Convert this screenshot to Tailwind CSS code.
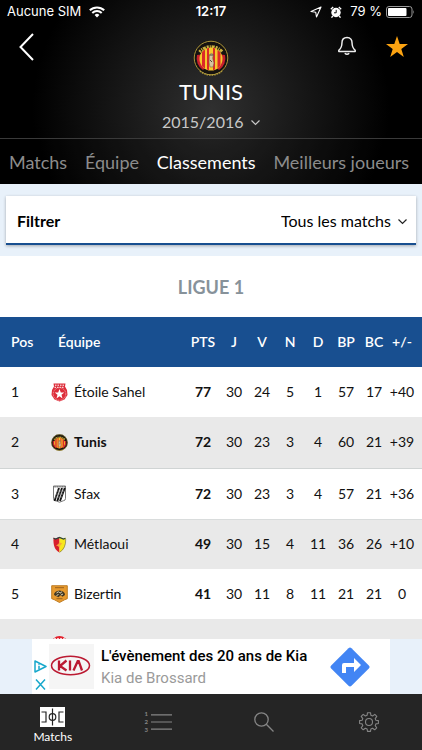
<!DOCTYPE html>
<html lang="fr">
  <head>
    <meta charset="UTF-8" />
    <meta name="viewport" content="width=device-width, initial-scale=1.0" />
    <title>Tunis - Classements</title>
    <script src="https://cdn.jsdelivr.net/npm/@tailwindcss/browser@4"></script>
  </head>
  <body class="h-screen flex flex-col overflow-hidden bg-[#e8f1fa] font-['Lato',sans-serif] text-[#111]">
    <!-- Shared crests -->
    <svg class="hidden">
      <symbol id="crest-tunis" viewBox="0 0 36 36">
        <circle cx="18" cy="18" r="17.5" fill="#161310" />
        <circle cx="18" cy="18" r="16.8" fill="none" stroke="#b09a3c" stroke-width="1" />
        <path d="M4 15a14 14 0 0 0 6 15l3-3V14z" fill="#c8202c" />
        <path d="M32 15a14 14 0 0 1-6 15l-3-3V14z" fill="#c8202c" />
        <path d="M6.5 12a15 15 0 0 1 23 0" fill="none" stroke="#cdb23f" stroke-width="3" stroke-dasharray="2 1 1 .8 3 1" />
        <path d="M7 31a17 17 0 0 0 22 0" fill="none" stroke="#b09a3c" stroke-width="1.6" stroke-dasharray="1.5 1" />
        <circle cx="18" cy="19" r="11.5" fill="#f6c62c" />
        <path d="M9 12.500q2-2.500 3-3v19q-1.500-1-3-2.600zM14 8.500l2-.7v22.500l-2-.7zM20 7.800l2 .7v21l-2 .7zM24.500 10q2 1.500 3 3v12q-1 2-3 3.500z" fill="#dc2828" />
        <path d="M16.500 15l2-2 2 2-1 3 1.500 5-1 4h-3l-1-5z" fill="#d6c4a0" stroke="#6b5434" stroke-width=".5" />
        <path d="M16.500 15h4M17 20l2 2" stroke="#332820" stroke-width=".8" />
      </symbol>
      <symbol id="crest-sahel" viewBox="0 0 17 19">
        <path d="M2.500.5h12l-.5 3 2 3.500.5 5-3 4.500-5 2-5-2-3-4.500L1 7l2-3.500z" fill="#dd2d3a" />
        <path d="M4 2.200h9M3.500 4.300h10" stroke="#fff" stroke-width="1" stroke-dasharray="1.500 1" />
        <circle cx="8.500" cy="11" r="6.300" fill="none" stroke="#f7b9bd" stroke-width=".8" stroke-dasharray="1 .7" />
        <path d="M8.500 6l1.300 3.500 3.500.1-2.800 2.200 1 3.600-3-2.100-3 2.100 1-3.600-2.800-2.200 3.500-.1z" fill="#fff" />
      </symbol>
    </svg>

    <header class="shrink-0 bg-[radial-gradient(circle_at_50%_60%,#303030_0%,#1b1b1b_32%,#000_75%)] text-white">
      <!-- Status bar -->
      <div class="h-6 px-[7px] grid grid-cols-3 items-center font-['Inter',sans-serif] text-[13px]">
        <div class="flex items-center gap-2 whitespace-nowrap">
          <span>Aucune SIM</span>
          <svg class="w-4 h-3" viewBox="0 0 16 12" fill="none" stroke="#fff" stroke-width="2">
            <path d="M.8 4.300a10.400 10.400 0 0 1 14.400 0M3.300 7a6.800 6.800 0 0 1 9.400 0" />
            <path d="M8 11.500L5.600 9a3.500 3.500 0 0 1 4.800 0z" fill="#fff" stroke="none" />
          </svg>
        </div>
        <div class="text-center font-semibold">12:17</div>
        <div class="flex items-center justify-end gap-1 whitespace-nowrap">
          <svg class="w-3 h-3 mr-1" viewBox="0 0 12 12" fill="none" stroke="#fff" stroke-width="1.100" stroke-linejoin="round">
            <path d="M11 1L1 5.500l4.700.7.800 4.800z" />
          </svg>
          <svg class="w-3 h-3 mr-1" viewBox="0 0 12 12">
            <circle cx="6" cy="6.500" r="4.700" fill="#fff" />
            <path d="M.8 3.200L3.200 1M11.200 3.200L8.800 1M2.800 10L1.500 11.700M9.200 10l1.300 1.700" stroke="#fff" stroke-width="1.300" />
            <path d="M6.200 3.800v3H4" fill="none" stroke="#111" stroke-width="1" />
          </svg>
          <span>79 %</span>
          <svg class="w-[29px] h-3" viewBox="0 0 29 12">
            <rect x=".5" y=".5" width="25.500" height="11" rx="2.500" fill="none" stroke="#999" />
            <rect x="2" y="2" width="18.500" height="8" rx="1" fill="#fff" />
            <path d="M27.300 4q1.500 2 0 4z" fill="#999" />
          </svg>
        </div>
      </div>

      <div class="flex justify-between items-start px-3 h-[114px]">
        <button class="w-[88px] pl-[7px] pt-[9px]" aria-label="Retour">
          <svg class="w-4 h-7" viewBox="0 0 16 28" fill="none" stroke="#fff" stroke-width="2">
            <path d="M14 1L1.500 14 14 27" />
          </svg>
        </button>
        <div class="flex flex-col items-center pt-4">
          <svg class="w-9 h-9"><use href="#crest-tunis" /></svg>
          <h1 class="text-[22px] leading-7 mt-[2px]">TUNIS</h1>
          <div class="relative mt-1">
            <select aria-label="Saison" class="appearance-none bg-transparent text-base leading-6 text-[#c8c8c8] pr-4">
              <option>2015/2016</option>
            </select>
            <svg class="absolute right-0 top-2 w-[9px] h-[9px] pointer-events-none" viewBox="0 0 9 9" fill="none" stroke="#c8c8c8" stroke-width="1.200">
              <path d="M.5 2.500l4 4 4-4" />
            </svg>
          </div>
        </div>
        <div class="w-[88px] flex justify-end items-start gap-[30px] pt-3 pr-[2px]">
          <button aria-label="Notifications">
            <svg class="w-[18px] h-5" viewBox="0 0 16 20" preserveAspectRatio="none" fill="none" stroke="#eee" stroke-width="1.300" stroke-linejoin="round">
              <path d="M8 1.500C4.800 1.500 3.500 4 3.500 7c0 4-.8 5.500-2.800 7.200v1.300h14.600v-1.300c-2-1.700-2.800-3.200-2.800-7.200 0-3-1.300-5.500-4.500-5.500z" />
              <path d="M6 17.200q2 2 4 0" />
            </svg>
          </button>
          <button aria-label="Favori">
            <svg class="w-[22px] h-[22px]" viewBox="0 0 22 22">
              <path d="M11 0l2.700 8H22l-6.700 5 2.500 8-6.800-5-6.800 5 2.500-8L0 8h8.300z" fill="#fca311" />
            </svg>
          </button>
        </div>
      </div>

      <nav class="h-[46px] border-t border-[#3a3a3a] px-[9px] flex items-center justify-between whitespace-nowrap text-lg text-[#8c8c8c] bg-black/20">
        <a href="#">Matchs</a>
        <a href="#">Équipe</a>
        <a href="#" class="text-white">Classements</a>
        <a href="#" class="mr-1">Meilleurs joueurs</a>
      </nav>
    </header>

    <main class="flex-1 min-h-0 overflow-hidden">
      <div class="px-[6px] pt-3 pb-[11px]">
        <div class="h-[49px] bg-white border-b-2 border-[#184f90] shadow-[0_1px_3px_rgba(0,0,0,0.3)] pl-[11px] pr-[9px] pt-[2px] flex items-center justify-between">
          <label for="filter" class="text-base font-bold text-black">Filtrer</label>
          <div class="relative">
            <select id="filter" class="appearance-none bg-transparent text-base leading-6 text-black pr-4">
              <option>Tous les matchs</option>
            </select>
            <svg class="absolute right-0 top-2 w-[9px] h-[9px] pointer-events-none" viewBox="0 0 9 9" fill="none" stroke="#222" stroke-width="1.200">
              <path d="M.5 2.500l4 4 4-4" />
            </svg>
          </div>
        </div>
      </div>

      <section class="bg-white">
        <h2 class="h-[61px] flex items-center justify-center text-lg font-bold text-[#87929a]">LIGUE 1</h2>
        <table class="w-full table-fixed text-center text-sm">
          <colgroup>
            <col class="w-[47px]" />
            <col />
            <col class="w-[34px]" />
            <col class="w-7" />
            <col class="w-7" />
            <col class="w-7" />
            <col class="w-7" />
            <col class="w-7" />
            <col class="w-7" />
            <col class="w-[34px]" />
          </colgroup>
          <thead class="bg-[#184f90] text-white">
            <tr class="h-[50px]">
              <th class="text-left pl-[11px] font-semibold">Pos</th>
              <th class="text-left pl-[11px] font-semibold">Équipe</th>
              <th class="font-semibold">PTS</th>
              <th class="font-semibold">J</th>
              <th class="font-semibold">V</th>
              <th class="font-semibold">N</th>
              <th class="font-semibold">D</th>
              <th class="font-semibold">BP</th>
              <th class="font-semibold">BC</th>
              <th class="font-semibold pr-[6px]">+/-</th>
            </tr>
          </thead>
          <tbody>
            <tr class="h-[50px]">
              <td class="text-left pl-[11px]">1</td>
              <td class="pl-1">
                <div class="flex items-center gap-[6px]">
                  <svg class="w-[17px] h-[19px]"><use href="#crest-sahel" /></svg>
                  <span>Étoile Sahel</span>
                </div>
              </td>
              <td class="font-bold">77</td><td>30</td><td>24</td><td>5</td><td>1</td><td>57</td><td>17</td>
              <td class="pr-[6px]">+40</td>
            </tr>
            <tr class="h-[51px] bg-[#e9e9e9] border-b border-[#d0d4d4]">
              <td class="text-left pl-[11px]">2</td>
              <td class="pl-1">
                <div class="flex items-center gap-[6px]">
                  <svg class="w-[17px] h-[17px]"><use href="#crest-tunis" /></svg>
                  <span class="font-bold">Tunis</span>
                </div>
              </td>
              <td class="font-bold">72</td><td>30</td><td>23</td><td>3</td><td>4</td><td>60</td><td>21</td>
              <td class="pr-[6px]">+39</td>
            </tr>
            <tr class="h-[51px] border-b border-[#d9dcdc]">
              <td class="text-left pl-[11px]">3</td>
              <td class="pl-1">
                <div class="flex items-center gap-[6px]">
                  <svg class="w-[17px] h-[18px]" viewBox="0 0 17 18">
                    <path d="M2.500 1h12v12.500q0 2-2 2.200l-4 1.500-4-1.500q-2-.2-2-2.200z" fill="#fff" stroke="#555" stroke-width=".8" />
                    <path d="M2.500 1.800h12" stroke="#777" stroke-width="1.600" stroke-dasharray="1.200 .5" />
                    <path d="M3.500 16L8 3M6.300 16L11 3M9 16l4.800-13" stroke="#151515" stroke-width="1.900" />
                    <path d="M5 9h7M4 12h7M6 6h7" stroke="#aaa" stroke-width=".6" />
                  </svg>
                  <span>Sfax</span>
                </div>
              </td>
              <td class="font-bold">72</td><td>30</td><td>23</td><td>3</td><td>4</td><td>57</td><td>21</td>
              <td class="pr-[6px]">+36</td>
            </tr>
            <tr class="h-[50px] bg-[#e9e9e9]">
              <td class="text-left pl-[11px]">4</td>
              <td class="pl-1">
                <div class="flex items-center gap-[6px]">
                  <svg class="w-[17px] h-[17px]" viewBox="0 0 17 17">
                    <path d="M2.500 1.500l2 1 4-1.500v15.500C4 14 2 10 2.500 1.500z" fill="#d81e2c" />
                    <path d="M14.500 1.500l-2 1-4-1.500v15.500c4.500-2.500 6.500-6.500 6-15z" fill="#f7e71d" />
                    <path d="M2.500 2.200l2 .8 4-1.600 4 1.600 2-.8" fill="none" stroke="#29443f" stroke-width="1.200" />
                    <path d="M8.500 5l1 2 2 .5-2 1.500-1 3-1.500-2-2-.5 2.500-1.500z" fill="#f9a83a" />
                    <path d="M14.700 3q.5 9-6 13.300" fill="none" stroke="#6c6340" stroke-width=".6" />
                  </svg>
                  <span>Métlaoui</span>
                </div>
              </td>
              <td class="font-bold">49</td><td>30</td><td>15</td><td>4</td><td>11</td><td>36</td><td>26</td>
              <td class="pr-[6px]">+10</td>
            </tr>
            <tr class="h-[50px]">
              <td class="text-left pl-[11px]">5</td>
              <td class="pl-1">
                <div class="flex items-center gap-[6px]">
                  <svg class="w-[17px] h-[18px]" viewBox="0 0 17 18">
                    <path d="M.7.7h15.600v13q-3 1-5 2.300L8.500 17.500 5.700 16q-2-1.300-5-2.300z" fill="#e79a2e" stroke="#b9751b" stroke-width=".9" />
                    <path d="M3 10q0-4 5.500-4.500Q14 6 14 10l-2.500 1.800-2-1.500-2 2z" fill="#423823" />
                    <path d="M5.500 8l2-1.300 1.500 1.500 2-1.500M5.500 10.500l2-1M10 10l2-1" fill="none" stroke="#ded6b8" stroke-width="1" />
                    <path d="M4 2.700h9M5.500 13.700h6" stroke="#845219" stroke-width=".8" />
                  </svg>
                  <span>Bizertin</span>
                </div>
              </td>
              <td class="font-bold">41</td><td>30</td><td>11</td><td>8</td><td>11</td><td>21</td><td>21</td>
              <td class="pr-[6px]">0</td>
            </tr>
            <!-- Next row, mostly hidden behind the ad -->
            <tr class="h-[50px] bg-[#e9e9e9]">
              <td></td>
              <td class="pl-1">
                <svg class="w-[17px] h-[18px]" viewBox="0 0 17 18">
                  <circle cx="8.500" cy="9" r="8" fill="#e3222e" />
                  <path d="M3 3.500h11" stroke="#f4c5c8" stroke-width="1" stroke-dasharray="2 1" />
                </svg>
              </td>
              <td></td><td></td><td></td><td></td><td></td><td></td><td></td><td></td>
            </tr>
          </tbody>
        </table>
      </section>
    </main>

    <!-- Ad banner -->
    <aside class="shrink-0 px-8 bg-[#e8f1fa]">
      <a href="#" class="h-[55px] bg-white flex items-center font-['Roboto',sans-serif] pl-[2px] pr-5">
        <span class="flex flex-col gap-[6px] pt-4 shrink-0">
          <svg class="w-[13px] h-[13px]" viewBox="0 0 13 13" fill="none" stroke="#18a8cc" stroke-width="1.500" stroke-linejoin="round">
            <path d="M1 1l11 5.500L1 12z" />
            <path d="M5 5.800v3.400M5 3.700v1" />
          </svg>
          <svg class="w-[13px] h-[11px]" viewBox="0 0 13 11" stroke="#18a8cc" stroke-width="1.500">
            <path d="M2 .5l9 10M11 .5l-9 10" />
          </svg>
        </span>
        <svg class="w-[45px] h-[45px] ml-[2px] shrink-0 bg-[#f5f5f5]" viewBox="0 0 45 45" fill="none" stroke="#bb1a32">
          <ellipse cx="21.500" cy="21.500" rx="19" ry="9.200" stroke-width="1.500" />
          <path d="M10 16.500v10M17.500 16.500L11 22l6.500 4.500M21 16.500v10M24.500 26.500l4.200-9.300h1l3.300 9.300" stroke-width="2.300" />
        </svg>
        <span class="flex-1 pl-[7px] pt-px whitespace-nowrap">
          <span class="block text-[15px] leading-[22px] font-medium text-black">L'évènement des 20 ans de Kia</span>
          <span class="block text-[15px] leading-[22px] text-[#9a9a9a]">Kia de Brossard</span>
        </span>
        <svg class="w-10 h-10 shrink-0" viewBox="0 0 40 40">
          <path d="M18.500 1.200q1.500-1.500 3 0l17.300 17.300q1.500 1.500 0 3L21.500 38.800q-1.500 1.500-3 0L1.200 21.500q-1.500-1.500 0-3z" fill="#4285f4" />
          <path d="M12 26V18q0-2 2-2h10v-5l7 7-7 7v-5h-8v6z" fill="#fff" />
        </svg>
      </a>
    </aside>

    <!-- Tab bar -->
    <nav class="shrink-0 h-14 bg-[#252525] grid grid-cols-4 items-center justify-items-center">
      <a href="#" class="flex flex-col items-center text-white text-xs leading-4 gap-[2px] pt-[7px]">
        <svg class="w-[25px] h-5" viewBox="0 0 25 20" fill="none" stroke="#252525" stroke-width="1.200">
          <path d="M0 0h25v20H0z" fill="#fff" stroke="none" />
          <path d="M1.500 5H6v10H1.500M23.500 5H19v10h4.500M12.500 1.500v17" />
          <circle cx="12.500" cy="10" r="3.300" />
        </svg>
        <span>Matchs</span>
      </a>
      <a href="#" class="flex items-center gap-[3px] text-[#858585]" aria-label="Classements">
        <span class="flex flex-col text-[6px] leading-[8px] font-bold"><span>1</span><span>2</span><span>3</span></span>
        <svg class="w-[21px] h-4" viewBox="0 0 21 16" stroke="currentColor" stroke-width="1.200">
          <path d="M0 .8h21M0 8h21M0 15.200h21" />
        </svg>
      </a>
      <a href="#" aria-label="Rechercher">
        <svg class="w-5 h-5" viewBox="0 0 20 20" fill="none" stroke="#858585" stroke-width="1.300">
          <circle cx="7.500" cy="7.500" r="6.700" />
          <path d="M12.300 12.300l7.200 7.200" />
        </svg>
      </a>
      <a href="#" aria-label="Réglages">
        <svg class="w-5 h-5" viewBox="0 0 20 20" fill="none" stroke="#858585" stroke-width="1.100" stroke-linejoin="round">
          <path d="M8.500.7h3l.4 2.600 1.700.7 2.200-1.600 2 2L16.200 6.600l.7 1.600 2.500.4v2.900l-2.500.4-.7 1.700 1.500 2.200-2 2-2.200-1.500-1.600.7-.4 2.400h-3l-.4-2.400-1.700-.7-2.200 1.500-2-2 1.600-2.200-.7-1.700-2.500-.4V8.600l2.500-.4.7-1.600L2.200 4.400l2-2L6.400 4l1.700-.7z" />
          <circle cx="10" cy="10" r="3.500" />
        </svg>
      </a>
    </nav>
  </body>
</html>
